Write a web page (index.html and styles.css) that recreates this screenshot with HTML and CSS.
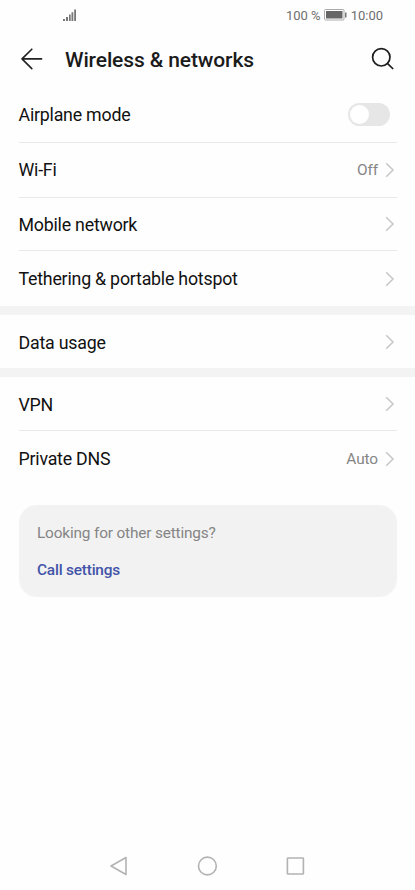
FILE: index.html
```html
<!DOCTYPE html>
<html lang="en">
<head>
<meta charset="utf-8">
<title>Wireless &amp; networks</title>
<link rel="stylesheet" href="styles.css">
</head>
<body>
<div class="status">
  <svg class="signal" width="14" height="13" viewBox="0 0 14 13" fill="#777"><path d="M0 10h2v2H0zM3 8h2v4H3zM6 5.500h1.700v6.500H6zM8.500 3.200h1.800V12H8.500zM11.200 .5H13V12h-1.800z"/></svg>
  <div class="status-right">
    <span class="percent">100 %</span>
    <svg class="battery" width="23" height="12" viewBox="0 0 23 12"><rect x=".5" y=".5" width="19.500" height="10.500" rx="1" fill="#fff" stroke="#aaa"/><rect x="2" y="2" width="16.500" height="7.500" fill="#666"/><path d="M21 3.500h1.500v5H21z" fill="#777"/></svg>
    <span class="clock">10:00</span>
  </div>
</div>
<header class="header">
  <svg class="back" width="22" height="22" viewBox="0 0 22 22" fill="none" stroke="#222" stroke-width="1.600" stroke-linecap="round" stroke-linejoin="round"><path d="M10.800 1.200L1 10.900l9.800 9.700M1 10.900h19.600"/></svg>
  <h1 class="title">Wireless &amp; networks</h1>
  <svg class="search" width="24" height="24" viewBox="0 0 24 24" fill="none" stroke="#1c1c1c" stroke-width="1.700"><circle cx="10.300" cy="10.300" r="8.700"/><path d="M16.600 16.600l5.600 5.400"/></svg>
</header>
<main>
  <section class="group first">
    <div class="row r1"><span class="label">Airplane mode</span><span class="toggle"><span class="knob"></span></span></div>
    <div class="row r2"><span class="label">Wi-Fi</span><span class="value">Off</span><svg class="chev" width="10" height="16" viewBox="0 0 10 16"><path d="M1.200 1.200L8 8l-6.800 6.800"/></svg></div>
    <div class="row r3"><span class="label">Mobile network</span><svg class="chev" width="10" height="16" viewBox="0 0 10 16"><path d="M1.200 1.200L8 8l-6.800 6.800"/></svg></div>
    <div class="row r4"><span class="label">Tethering &amp; portable hotspot</span><svg class="chev" width="10" height="16" viewBox="0 0 10 16"><path d="M1.200 1.200L8 8l-6.800 6.800"/></svg></div>
  </section>
  <section class="group">
    <div class="row r5"><span class="label">Data usage</span><svg class="chev" width="10" height="16" viewBox="0 0 10 16"><path d="M1.200 1.200L8 8l-6.800 6.800"/></svg></div>
  </section>
  <section class="group">
    <div class="row r6"><span class="label">VPN</span><svg class="chev" width="10" height="16" viewBox="0 0 10 16"><path d="M1.200 1.200L8 8l-6.800 6.800"/></svg></div>
    <div class="row r7"><span class="label">Private DNS</span><span class="value">Auto</span><svg class="chev" width="10" height="16" viewBox="0 0 10 16"><path d="M1.200 1.200L8 8l-6.800 6.800"/></svg></div>
  </section>
  <aside class="card">
    <p class="hint">Looking for other settings?</p>
    <a class="link">Call settings</a>
  </aside>
</main>
<nav class="nav">
  <svg width="20" height="22" viewBox="0 0 20 22"><path d="M17 2.500v17L2 11z"/></svg>
  <svg width="22" height="22" viewBox="0 0 22 22"><circle cx="11.400" cy="11" r="8.900"/></svg>
  <svg width="20" height="22" viewBox="0 0 20 22"><rect x="2.400" y="3" width="16" height="16" rx=".5"/></svg>
</nav>
</body>
</html>
```
FILE: styles.css
```css
* { box-sizing: border-box; }
body {
  margin: 0;
  height: 890px;
  display: flex;
  flex-direction: column;
  background: #fefefe;
  color: #111;
  font-family: Roboto, sans-serif;
  overflow: hidden;
}
.status {
  height: 32px;
  display: flex;
  align-items: center;
  justify-content: space-between;
  padding: 0 32px 2px 63px;
  font-size: 13px;
  color: #6e6e6e;
}
.status-right { display: flex; align-items: center; }
.battery { margin: 0 4px 0 3px; }
.header {
  height: 56px;
  display: flex;
  align-items: center;
  padding: 0 20px 2px 21px;
}
.title {
  flex: 1;
  margin: 1px 0 0 22px;
  font-size: 21px;
  letter-spacing: -0.110px;
  font-weight: 500;
  color: #1b1b1b;
}
.group + .group { border-top: 9px solid #f3f3f3; }
.row {
  display: flex;
  align-items: center;
  margin: 0 18.500px;
  border-bottom: 1px solid #e9e9e9;
}
.row:last-child { border-bottom: 0; }
.r1 { height: 55px; }
.r2 { height: 55px; }
.r3 { height: 53px; }
.r4 { height: 55px; }
.r5 { height: 53px; }
.r6 { height: 54px; }
.r7 { height: 56px; }
.label { flex: 1; font-size: 17.800px; letter-spacing: -0.220px; white-space: nowrap; }
.r3 .label, .r5 .label, .r6 .label { padding-top: 1px; }
.r1 .label, .r2 .label, .r7 .label { padding-bottom: 1px; }
.value { font-size: 15.400px; letter-spacing: -0.100px; color: #858585; margin-right: 6.500px; }
.chev { margin-right: 2px; fill: none; stroke: #c8c8c8; stroke-width: 1.600; }
.toggle {
  width: 42px;
  height: 23px;
  margin: 0 6.500px 1px 0;
  padding: 2px;
  border-radius: 12px;
  background: #e6e6e6;
}
.knob { display: block; width: 19px; height: 19px; border-radius: 50%; background: #fff; }
.card {
  height: 92px;
  margin: 18px 18.500px 0;
  padding: 19px 18.500px;
  border-radius: 18px;
  background: #f2f2f2;
}
.hint { margin: 0 0 19px; font-size: 15.400px; letter-spacing: -0.170px; line-height: 18px; color: #858585; }
.link { display: block; font-size: 15.400px; letter-spacing: -0.200px; line-height: 18px; font-weight: 500; color: #4355a8; }
.nav {
  margin-top: auto;
  height: 48px;
  display: flex;
  align-items: center;
  justify-content: space-between;
  padding: 0 110px 0 109px;
}
.nav svg { fill: none; stroke: #b3b3b3; stroke-width: 1.600; stroke-linejoin: round; }
```
